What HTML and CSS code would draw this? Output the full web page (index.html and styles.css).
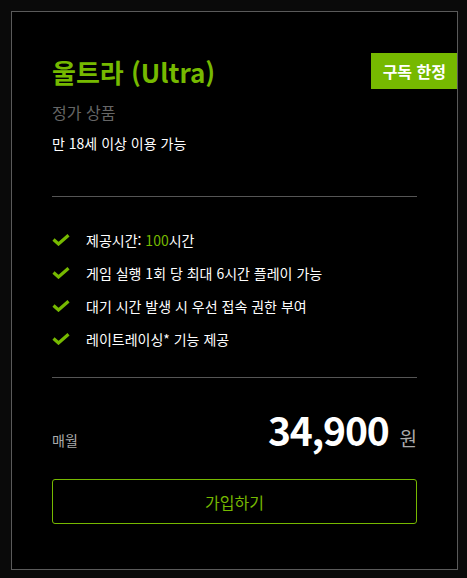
FILE: index.html
```html
<!DOCTYPE html>
<html lang="ko">
<head>
    <meta charset="UTF-8">
    <meta name="viewport" content="width=device-width, initial-scale=1.0">
    <title>울트라 (Ultra)</title>
    <link rel="stylesheet" href="styles.css">
</head>
<body>

    <div class="plan-card">
        <span class="badge">구독 한정</span>

        <h1 class="plan-name">울트라 (Ultra)</h1>
        <p class="plan-type">정가 상품</p>
        <p class="plan-age">만 18세 이상 이용 가능</p>

        <hr class="divider">

        <ul class="features">
            <li>
                <svg class="check" viewBox="0 0 18 12"><path d="M1.5 5.5 L6.5 10 L16.5 1.3"/></svg>
                <span>제공시간: <em>100</em>시간</span>
            </li>
            <li>
                <svg class="check" viewBox="0 0 18 12"><path d="M1.5 5.5 L6.5 10 L16.5 1.3"/></svg>
                <span>게임 실행 1회 당 최대 6시간 플레이 가능</span>
            </li>
            <li>
                <svg class="check" viewBox="0 0 18 12"><path d="M1.5 5.5 L6.5 10 L16.5 1.3"/></svg>
                <span>대기 시간 발생 시 우선 접속 권한 부여</span>
            </li>
            <li>
                <svg class="check" viewBox="0 0 18 12"><path d="M1.5 5.5 L6.5 10 L16.5 1.3"/></svg>
                <span>레이트레이싱* 기능 제공</span>
            </li>
        </ul>

        <hr class="divider divider-bottom">

        <div class="price-row">
            <span class="period">매월</span>
            <span class="price">34,900</span>
            <span class="currency">원</span>
        </div>

        <button class="join-button">가입하기</button>
    </div>

</body>
</html>
```

FILE: styles.css
```css
* {
    margin: 0;
    padding: 0;
    box-sizing: border-box;
}

body {
    font-family: "Noto Sans CJK KR", "Noto Sans", sans-serif;
    background-color: #0a0a0a;
    color: #fff;
    padding: 11px;
}

/* Plan card */
.plan-card {
    position: relative;
    width: 447px;
    height: 559px;
    background-color: #000;
    border: 1px solid #5a5a5a;
    padding: 42px 40px 0 40px;
}

.badge {
    position: absolute;
    top: 41px;
    right: 0;
    background-color: #76b900;
    color: #fff;
    font-size: 16px;
    font-weight: 700;
    line-height: 36px;
    padding: 0 11px 0 12px;
}

.plan-name {
    color: #76b900;
    font-size: 26px;
    font-weight: 700;
    line-height: 36px;
}

.plan-type {
    color: #666;
    font-size: 16px;
    line-height: 22px;
    margin-top: 11px;
}

.plan-age {
    font-size: 14px;
    line-height: 20px;
    margin-top: 10px;
}

.divider {
    border: none;
    border-top: 1px solid #555;
    margin-top: 43px;
}

/* Feature list */
.features {
    list-style: none;
    margin-top: 32px;
    display: flex;
    flex-direction: column;
    gap: 11px;
}

.features li {
    display: flex;
    align-items: center;
    font-size: 14px;
    line-height: 22px;
}

.features em {
    font-style: normal;
    color: #76b900;
}

.check {
    width: 18px;
    height: 12px;
    margin-right: 16px;
    fill: none;
    stroke: #76b900;
    stroke-width: 3.2;
}

.divider-bottom {
    margin-top: 27px;
}

/* Price */
.price-row {
    display: flex;
    align-items: baseline;
    margin-top: 24px;
}

.period {
    color: #aaa;
    font-size: 14px;
    flex: 1;
}

.price {
    font-size: 39px;
    font-weight: 700;
    letter-spacing: -1.2px;
    line-height: 54px;
}

.currency {
    color: #aaa;
    font-size: 19px;
    margin-left: 11px;
}

/* Join button */
.join-button {
    display: block;
    width: 100%;
    height: 45px;
    margin-top: 23px;
    background: transparent;
    border: 1px solid #76b900;
    border-radius: 3px;
    color: #76b900;
    font-family: inherit;
    font-size: 16px;
    cursor: pointer;
}
```
